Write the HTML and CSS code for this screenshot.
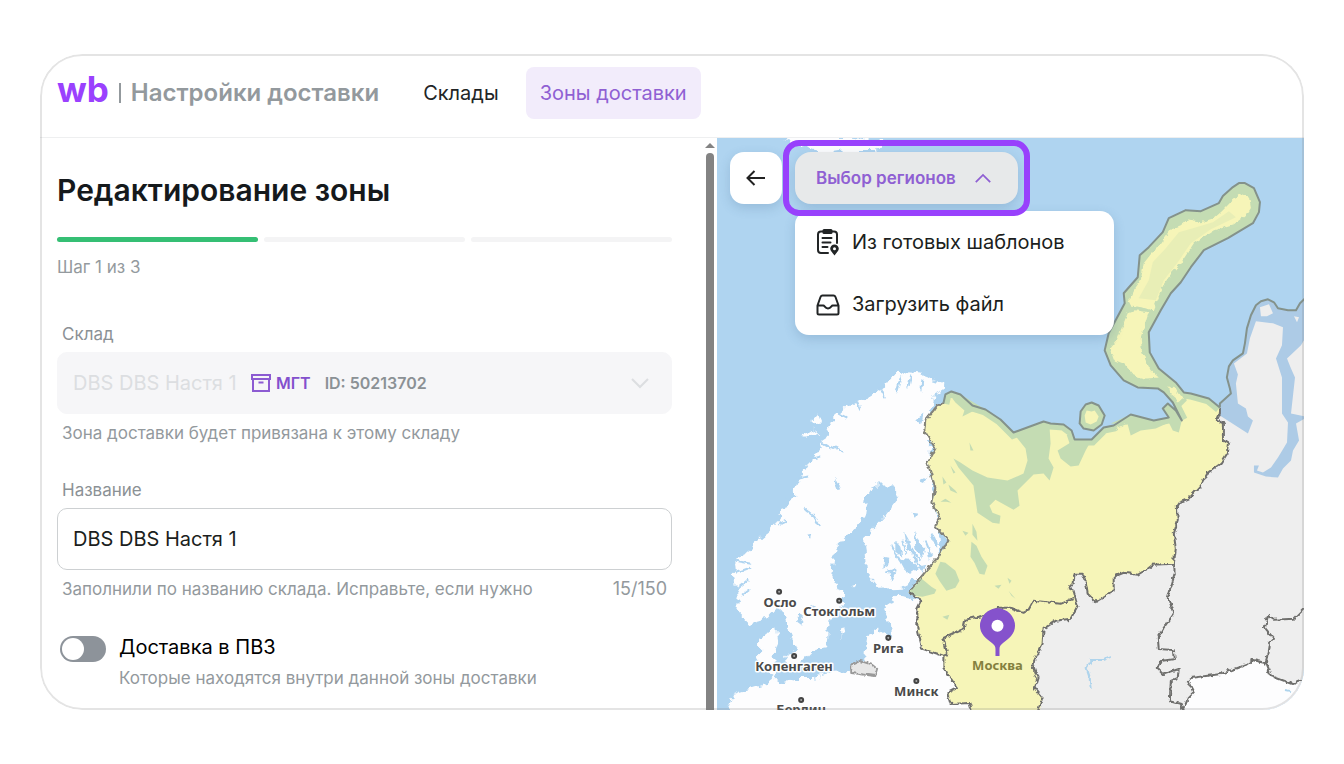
FILE: index.html
```html
<!DOCTYPE html>
<html lang="ru">
<head>
<meta charset="utf-8">
<meta name="viewport" content="width=device-width, initial-scale=1">
<title>Настройки доставки</title>
<link rel="stylesheet" href="styles.css">
</head>
<body>
<div class="window">
  <header class="header">
    <div class="brand">
      <span class="brand-logo">wb</span>
      <span class="brand-divider"></span>
      <span class="brand-name">Настройки доставки</span>
    </div>
    <nav class="nav">
      <a class="nav-link" href="#warehouses">Склады</a>
      <a class="nav-link nav-link-active" href="#zones">Зоны доставки</a>
    </nav>
  </header>

  <main class="main">
    <section class="panel">
      <form class="form">
        <h1 class="title">Редактирование зоны</h1>
        <div class="steps">
          <span class="step step-done"></span>
          <span class="step"></span>
          <span class="step"></span>
        </div>
        <p class="steps-text">Шаг 1 из 3</p>

        <div class="field">
          <label class="label" for="warehouse">Склад</label>
          <div class="select-box">
            <select class="control select" id="warehouse" disabled>
              <option>DBS DBS Настя 1</option>
            </select>
            <div class="select-meta">
              <svg class="box-icon" viewBox="0 0 20 20"><path d="M1 2h18v4H1zM2 6v12h16V6M7.500 9.500h5"/></svg>
              <span class="tag">МГТ</span>
              <span class="id">ID: 50213702</span>
              <svg class="chevron chevron-muted" viewBox="0 0 20 12"><path d="M2 2l8 8 8-8"/></svg>
            </div>
          </div>
          <div class="hint"><span>Зона доставки будет привязана к этому складу</span></div>
        </div>

        <div class="field">
          <label class="label" for="name">Название</label>
          <input class="control input" id="name" type="text" value="DBS DBS Настя 1">
          <div class="hint"><span>Заполнили по названию склада. Исправьте, если нужно</span><span class="counter">15/150</span></div>
        </div>

        <div class="toggle-row">
          <input class="toggle" id="pickup" type="checkbox" role="switch">
          <div class="toggle-text">
            <label class="toggle-label" for="pickup">Доставка в ПВЗ</label>
            <p class="toggle-hint">Которые находятся внутри данной зоны доставки</p>
          </div>
        </div>
      </form>
      <div class="scrollbar">
        <span class="scroll-arrow"></span>
        <span class="scroll-thumb"></span>
      </div>
    </section>

    <section class="map">
      <svg class="map-canvas" viewBox="717 138 586 571" preserveAspectRatio="xMinYMin slice">
        <defs>
          <filter id="coast" x="-5%" y="-5%" width="110%" height="110%" color-interpolation-filters="sRGB">
            <feTurbulence type="fractalNoise" baseFrequency="0.13" numOctaves="2" seed="4"/>
            <feDisplacementMap in="SourceGraphic" scale="11" xChannelSelector="R" yChannelSelector="G"/>
          </filter>
          <filter id="rough" x="-5%" y="-5%" width="110%" height="110%" color-interpolation-filters="sRGB">
            <feTurbulence type="fractalNoise" baseFrequency="0.2" numOctaves="2" seed="8"/>
            <feDisplacementMap in="SourceGraphic" scale="5" xChannelSelector="R" yChannelSelector="G"/>
          </filter>
          <path id="northwest" d="M943 403L945 394 951 391 960 394 972 405 985 409 1000 419 1013 432 1043 421 1050 423 1063 424 1071 430 1074 439 1091 439 1103 427 1113 425 1130 414 1153 420 1168 417 1162 408 1167 403 1175 410 1181 420 1172 402 1183 392 1190 393 1208 398 1219 407 1219 413 1216 420 1223 423 1223 440 1228 443 1227 452 1220 463 1207 472 1200 485 1188 498 1178 502 1176 505 1177 520 1173 533 1175 548 1173 563 1152 564 1147 568 1137 574 1123 572 1113 576 1113 590 1095 601 1087 593 1085 580 1082 573 1074 573 1073 582 1068 587 1073 590 1077 605 1070 618 1055 620 1043 628 1042 643 1032 663 1037 677 1034 687 1042 697 1037 720 972 720 969 702 950 703 947 692 957 687 943 667 943 655 922 648 917 628 917 607 921 599 908 592 920 577 937 557 948 540 935 525 939 517 932 502 935 487 927 462 935 448 924 430 925 420 937 405Z"/>
          <path id="north-coast" d="M943 403L945 394 951 391 960 394 972 405 985 409 1000 419 1013 432 1043 421 1050 423 1063 424 1071 430 1074 439 1091 439 1103 427 1113 425 1130 414 1153 420 1168 417 1162 408 1167 403 1175 410 1181 420 1172 402 1163 392 1157 388 1137 387 1123 380 1110 365 1104 350 1108 333 1124 303 1123 293 1137 277 1139 255 1148 247 1162 232 1168 218 1185 210 1200 211 1218 203 1222 196 1232 187 1238 183 1244 183 1253 188 1259 202 1258 212 1252 223 1227 238 1203 250 1190 267 1180 282 1170 293 1160 310 1148 332 1149 352 1158 368 1175 382 1183 392 1190 393 1208 398 1219 407"/>
          <clipPath id="northwest-clip"><use href="#northwest"/></clipPath>
        </defs>
        <rect class="sea" x="700" y="120" width="1600" height="1200"/>

        <g class="land" filter="url(#coast)">
          <path d="M896 371l10 3 6-3 9 1 12 8 10 3-1 7-8 4-2 10-2 60 10 80-3 16-18 18-16 9-24 1-13-15-2-26 2-12 17-18 15-20-5-12-20 0-7 12-3 20-29 33-3 26 13 20-8 17-8 10-2 25-15 3-8 9-5-7-9-23-5-20-6-5-12 13-17 5-13-13 3-14-3-13-2-23 10-7 27-23 17-27 11-23 14-24 13-20 5-16 15-14 23-10 14-9z"/>
          <path d="M918 598l-19-3-15 10 5 12 2 20-13-9-12 5-2 24-13 13-18 2-20 5-17 0-13 5-14-9-10-16 0-17 17-13 2 13-4 17 2 18-10 8-33 10-10 30h260l-30-100z"/>
          <path d="M784 655l14-5 5 9-8 8-9-3zM841 628l3-4 1 8-4 4zM800 437l12-8 6 4-11 4zM810 423l8-9 3 8zM852 585l4-1-1 4z"/>
          <path d="M783 141l12-4 50 0 18 2 20 2-8 10-30 0-18 3-14-5z"/>
        </g>
        <g class="fjords" filter="url(#rough)">
          <path d="M901 375l-5 17M911 374l-3 13M922 378l-1 14M880 388l4 10M856 400l4 10M838 413l8 4M821 442l10 6M812 458l8-2M799 478l9-2M787 498l9-3M778 524l8-4M735 560l16 3M736 572l14-5M738 587l10-8M742 594l8-6M831 445l12 6M804 508l10 8 6 10M835 480l4 9"/>
          <path class="lake" d="M915 420l8-7-2 11zM835 478l5 8-3 1zM807 534l4-1-1 4zM919 480l8-4-3 6zM911 512l7 1-3 5zM798 612l6 3-3 9-4-3zM811 604l5 2-3 3z"/>
          <path class="lake" d="M904 531l5 9 3 12-5-3zM914 530l4 10 7 7-3 10-7-8zM895 540l5 6 2 10-7-6zM930 533l6 4 2 10-5-4zM898 558l12 1 8 8-9 6-5-4zM884 556l5 1-1 7-5 3zM926 551l7 3-5 6zM888 568l7 4-4 8zM918 566l8-2-4 8z"/>
          <path d="M891 545l6 12 8 8M902 540l4 14M912 548l4 14 8 6M886 572l10-4M925 540l5 12M906 566l10 2M920 560l-8-10"/>
        </g>

        <g class="inactive">
          <path class="inner-water" d="M1219 407L1219 403 1230 393 1229 388 1226 377 1228 366 1232 360 1242 353 1244 343 1246 328 1250 315 1255 305 1260 301 1267 299 1273 302 1277 308 1287 310 1295 310 1299 303 1304 298 1900 298 1900 500 1219 500Z"/>
          <path d="M1219 415L1247 433 1252 420 1247 416 1245 408 1237 403 1235 383 1237 374 1233 363 1246 353 1249 338 1255 321 1272 323 1282 327 1281 345 1275 358 1281 377 1281 413 1287 422 1286 442 1277 457 1270 467 1262 472 1256 470 1258 465 1253 465 1253 472 1265 476 1277 477 1282 468 1290 460 1292 450 1298 440 1295 423 1304 418 1900 418 1900 1300 1020 1300 1020 570 1160 540 1190 440Z"/>
          <path d="M1259 307L1268 304 1272 313 1266 316 1260 316ZM1293 316L1298 317 1296 322ZM1304 338L1300 345 1286 358 1290 368 1294 377 1290 413 1304 416 1900 416 1900 320Z"/>
        </g>
        <path class="land" d="M1182 712L1187 698 1193 692 1187 680 1190 677 1220 673 1245 664 1252 659 1265 662 1270 675 1292 683 1304 678 1304 712Z"/>

        <use class="region" href="#northwest"/>
        <g clip-path="url(#northwest-clip)"><use class="coast-band" href="#north-coast"/></g>
        <g class="moss">
          <path d="M1172 402L1163 392 1157 388 1137 387 1123 380 1110 365 1104 350 1108 333 1124 303 1123 293 1137 277 1139 255 1148 247 1162 232 1168 218 1185 210 1200 211 1218 203 1222 196 1232 187 1238 183 1244 183 1253 188 1259 202 1258 212 1252 223 1227 238 1203 250 1190 267 1180 282 1170 293 1160 310 1148 332 1149 352 1158 368 1175 382 1183 392 1186 400 1178 408Z"/>
          <path d="M1013 432L1043 421 1049 427 1050 443 1048 458 1053 467 1049 480 1043 473 1033 474 1017 490 1019 505 1013 509 995 499 989 505 992 512 1000 515 999 523 992 522 977 512 973 485 958 467 953 458 960 462 972 470 987 477 1007 480 1023 473 1027 460 1025 448 1017 438Z"/>
          <path d="M1057 450L1070 442 1074 438 1091 439 1085 450 1078 465 1070 466 1060 458Z"/>
          <path d="M1110 423L1130 414 1153 420 1168 417 1162 408 1167 403 1175 410 1181 420 1178 432 1172 430 1168 422 1155 428 1140 430 1130 435 1127 424Z"/>
          <path d="M952 398L960 394 985 409 990 414 972 411 962 416 964 410 955 402Z"/>
          <path d="M940 561L945 562 955 570 959 580 955 587 946 590 939 580 935 573ZM908 592L920 577 925 581 931 586 936 589 934 593 922 596 915 595ZM971 541L976 545 981 556 987 565 984 574 979 573 974 562 970 556ZM972 523L976 531 977 540 972 534ZM950 465L955 472 953 473ZM942 476L946 482 943 484ZM948 484L955 490 957 493 950 490ZM962 530L968 532 965 535ZM940 501L945 498 951 502 946 501ZM994 585L1001 584 998 588ZM1007 577L1011 580 1009 583ZM1008 590L1015 598 1011 595ZM942 616L949 614 947 619ZM969 442L973 450 970 450Z"/>
        </g>
        <g class="plain" filter="url(#rough)">
          <path d="M1240 194L1248 197 1250 208 1246 214 1233 224 1213 230 1193 243 1180 263 1170 274 1163 284 1157 297 1152 310 1130 305 1128 301 1133 290 1140 280 1143 263 1150 254 1157 247 1164 237 1170 229 1180 225 1187 219 1200 222 1213 218 1221 211 1229 203Z"/>
          <path d="M1127 313L1135 310 1148 312 1144 325 1140 337 1141 350 1145 360 1150 370 1158 377 1145 378 1133 375 1124 364 1114 360 1110 348 1116 340 1120 330Z"/>
          <path d="M1168 386L1175 388 1182 398 1178 401 1170 394Z"/>
          <path d="M1115 428L1125 424 1127 431 1119 429Z"/>
        </g>
        <path class="stripe" d="M1155 300L1163 280 1177 262 1190 243 1210 229 1235 217 1228 211 1212 222 1192 228 1178 232 1165 248 1152 262 1148 280 1138 298Z"/>

        <use class="shoreline" href="#north-coast"/>
        <path class="shoreline" d="M1219 407L1219 403 1230 393 1229 388 1226 377 1228 366 1232 360 1242 353 1244 343 1246 328 1250 315 1255 305 1260 301 1267 299 1273 302 1277 308 1287 310 1295 310 1299 303 1304 298"/>
        <path class="shoreline island" d="M1091 402L1098 405 1104 415 1101 424 1093 430 1083 428 1079 423 1080 411 1085 404Z"/>
        <path class="plain" d="M1086 410L1091 411 1094 410 1098 416 1096 421 1090 424 1085 422 1084 415Z"/>
        <path class="moss-line" d="M1129 308L1140 308 1151 311"/>

        <g class="borders" filter="url(#rough)">
          <path d="M1219 407L1219 413 1216 420 1223 423 1223 440 1228 443 1227 452 1220 463 1207 472 1200 485 1188 498 1178 502 1176 505 1177 520 1173 533 1175 548 1173 563 1152 564 1147 568 1137 574 1123 572 1113 576 1113 590 1095 601 1087 593 1085 580 1082 573 1074 573 1073 582 1068 587 1073 590 1077 605 1070 618 1055 620 1043 628 1042 643 1032 663 1037 677 1034 687 1042 697 1037 712"/>
          <path d="M972 712L969 702 950 703 947 692 957 687 943 667 943 655 922 648 917 628 917 607 921 599 908 592"/>
          <path class="thin" d="M908 592L920 577 937 557 948 540 935 525 939 517 932 502 935 487 927 462 935 448 924 430 925 420 937 405 943 403"/>
          <path d="M943 655L947 653 943 637 963 628 965 619 982 615 997 607 1010 607 1023 612 1028 609 1033 600 1060 603 1073 598"/>
          <path d="M1173 563L1174 573 1167 597 1173 613 1163 627 1157 637 1158 648 1173 649 1174 658 1160 660 1157 667 1163 673 1178 668 1177 677 1170 680 1169 700 1180 703 1182 710 1187 698 1193 692 1187 680 1190 677 1220 673 1245 664 1252 659 1265 662 1268 643 1273 638 1264 627 1267 615 1273 619 1293 618 1306 605"/>
          <path d="M1265 662L1270 675 1292 683 1304 678"/>
          <path class="enclave" d="M851 664L860 660 872 664 877 668 875 675 851 672Z"/>
        </g>
        <path class="river" filter="url(#rough)" d="M1111 656L1103 659 1091 659 1086 667 1089 676 1090 688M1284 689L1289 690"/>

        <g class="cities">
          <circle cx="779" cy="591" r="2"/><circle cx="839" cy="600" r="2"/><circle cx="888" cy="637" r="2"/>
          <circle cx="794" cy="655" r="2"/><circle cx="916" cy="680" r="2"/><circle cx="801" cy="699" r="2"/>
        </g>
        <g class="city-names">
          <text x="780" y="606">Осло</text>
          <text x="839" y="615">Стокгольм</text>
          <text x="888" y="652">Рига</text>
          <text x="794" y="670">Копенгаген</text>
          <text x="916" y="695">Минск</text>
          <text x="801" y="713">Берлин</text>
          <text class="capital" x="997" y="669">Москва</text>
        </g>
        <path class="pin" d="M997 607.500a17.500 17.500 0 0 0-17.500 17.500c0 8 6 13 12 17 2.500 2 3.500 3.500 3.500 6v7h4v-7c0-2.500 1-4 3.500-6 6-4 12-9 12-17a17.500 17.500 0 0 0-17.500-17.500z"/>
        <circle class="pin-hole" cx="997" cy="625" r="6"/>
      </svg>

      <div class="map-toolbar">
        <button class="back" type="button" aria-label="Назад">
          <svg class="back-icon" viewBox="0 0 24 24"><path d="M21 12H3.500M10.500 5l-7 7 7 7"/></svg>
        </button>
        <div class="regions">
          <button class="regions-button" type="button" aria-expanded="true">
            <span>Выбор регионов</span>
            <svg class="chevron chevron-accent" viewBox="0 0 20 12"><path d="M2 10l8-8 8 8"/></svg>
          </button>
          <div class="menu">
            <button class="menu-item" type="button">
              <svg class="menu-icon" viewBox="0 0 24 28"><path class="line" d="M7 3.500H5a3 3 0 0 0-3 3V22a3 3 0 0 0 3 3h7M16 3.500h2a3 3 0 0 1 3 3V15M6.500 10h9M6.500 14.500h8M6.500 19h5"/><rect x="6.500" y="1" width="10" height="5" rx="1.500"/><path fill-rule="evenodd" d="M18.500 16.500a4.300 4.300 0 0 0-4.300 4.300c0 2.200 2.200 3.800 4.300 6.700 2.100-2.900 4.300-4.500 4.300-6.700a4.300 4.300 0 0 0-4.300-4.300zm0 2.800a1.500 1.500 0 1 1 0 3 1.500 1.500 0 0 1 0-3z"/></svg>
              <span>Из готовых шаблонов</span>
            </button>
            <button class="menu-item" type="button">
              <svg class="menu-icon" viewBox="0 0 24 28"><path class="line" d="M1.500 15.500l3-8.500q.6-1.500 2-1.500h11q1.400 0 2 1.500l3 8.500V23a1.500 1.500 0 0 1-1.500 1.500H3A1.500 1.500 0 0 1 1.500 23zh6c1 0 1.500 3 4.500 3s3.500-3 4.500-3h6"/></svg>
              <span>Загрузить файл</span>
            </button>
          </div>
        </div>
      </div>
    </section>
  </main>
</div>
</body>
</html>
```

FILE: styles.css
```css
* { box-sizing: border-box; }

body {
  margin: 0;
  padding: 54px 40px;
  background: #fff;
  color: #1b1e20;
  font-family: Inter, "Noto Sans", sans-serif;
  font-size: 17px;
  line-height: 24px;
}

h1, p { margin: 0; }
button, input, select { font: inherit; color: inherit; }
svg { display: block; flex: none; }

.window {
  position: relative;
  overflow: hidden;
  border-radius: 42px;
  background: #fff;
}
.window::after {
  content: "";
  position: absolute;
  inset: 0;
  border: 2px solid rgba(120, 120, 120, .2);
  border-radius: 42px;
  pointer-events: none;
}

/* Header */
.header {
  display: flex;
  align-items: center;
  gap: 30px;
  height: 84px;
  padding: 0 17px 6px;
  border-bottom: 1px solid #eeeff0;
}
.brand { display: flex; align-items: center; }
.brand-logo {
  padding-bottom: 8px;
  color: #9a41fe;
  font-size: 35px;
  font-weight: 700;
  line-height: 40px;
}
.brand-divider { width: 2px; height: 20px; margin: 0 10px; background: #93999d; }
.brand-name { color: #93999d; font-size: 24px; font-weight: 600; line-height: 32px; }
.nav { display: flex; gap: 13px; }
.nav-link {
  padding: 12px 14px;
  border-radius: 8px;
  color: #222526;
  font-size: 20px;
  line-height: 28px;
  text-decoration: none;
}
.nav-link-active { background: #f2ecfb; color: #8f60d3; }

/* Body */
.main { display: grid; grid-template-columns: 677fr 587fr; }
.panel { display: flex; min-width: 0; }
.form { flex: 1; min-width: 0; padding: 32px 31px 20px 17px; }
.title { color: #15191c; font-size: 30px; font-weight: 600; line-height: 40px; }
.steps { display: grid; grid-template-columns: repeat(3, 1fr); gap: 6px; margin-top: 27px; }
.step { height: 5px; border-radius: 3px; background: #f4f4f5; }
.step-done { background: #35bf74; }
.steps-text { margin-top: 13px; color: #949a9e; }

.field { display: flex; flex-direction: column; margin-top: 33px; }
.steps-text + .field { margin-top: 43px; }
.label { padding-left: 5px; color: #8b9195; }
.control {
  width: 100%;
  height: 62px;
  margin: 0;
  padding: 0 15px;
  border: 1px solid #cdd0d2;
  border-radius: 10px;
  background: #fff;
  font-size: 20px;
}
.label + * { margin-top: 6px; }
.select-box { display: grid; }
.select-box > * { grid-area: 1 / 1; }
.select {
  appearance: none;
  border-color: #f6f6f8;
  background: #f6f6f8;
  color: #dcdee1;
  opacity: 1;
}
.select-meta { display: flex; align-items: center; padding: 0 22px 0 194px; pointer-events: none; }
.box-icon { width: 20px; height: 20px; fill: none; stroke: #8c5bd2; stroke-width: 2; }
.tag { margin-left: 5px; color: #8350cd; font-size: 16px; font-weight: 600; }
.id { margin-left: 14px; color: #8b9195; font-size: 16px; font-weight: 600; }
.chevron { fill: none; stroke-width: 2; }
.chevron-muted { width: 20px; height: 12px; margin-left: auto; stroke: #dcdee1; }
.hint {
  display: flex;
  justify-content: space-between;
  margin-top: 7px;
  padding: 0 5px;
  color: #93999d;
}
.counter { font-size: 18px; }

.toggle-row { display: flex; gap: 13px; margin-top: 34px; padding-left: 3px; }
.toggle {
  appearance: none;
  display: flex;
  flex: none;
  width: 46px;
  height: 26px;
  margin: 1px 0 0;
  padding: 2px;
  border-radius: 13px;
  background: #8d939a;
}
.toggle::before { content: ""; width: 22px; height: 22px; border-radius: 50%; background: #fff; }
.toggle:checked { justify-content: flex-end; background: #35bf74; }
.toggle-text { display: flex; flex-direction: column; gap: 7px; }
.toggle-label { color: #000; font-size: 20px; }
.toggle-hint { color: #93999d; }

.scrollbar {
  display: flex;
  flex-direction: column;
  align-items: center;
  gap: 5px;
  width: 14px;
  padding-top: 5px;
}
.scroll-arrow { border: 5px solid transparent; border-top: 0; border-bottom: 5px solid #838383; }
.scroll-thumb { flex: 1; width: 8px; border-radius: 4px 4px 0 0; background: #838383; }

/* Map */
.map { position: relative; min-width: 0; overflow: hidden; background: #afd4f0; }
.map-canvas { position: absolute; inset: 0; width: 100%; height: 100%; }
.sea { fill: #afd4f0; }
.land { fill: #fdfdfe; }
.fjords { fill: none; stroke: #afd4f0; stroke-width: 2; }
.lake { fill: #afd4f0; stroke: none; }
.inactive { fill: #eee; }
.inner-water { fill: #adcbe6; }
.region, .plain { fill: #f6f5b8; }
.moss { fill: #c4dcb3; }
.coast-band { fill: none; stroke: #c4dcb3; stroke-width: 12; }
.stripe { fill: #e8eeb6; }
.moss-line { fill: none; stroke: #c4dcb3; stroke-width: 2; }
.shoreline { fill: none; stroke: #84928b; stroke-width: 2; stroke-linejoin: round; }
.island { fill: #c4dcb3; }
.borders { fill: none; stroke: #6f6f6d; stroke-width: 2; stroke-linejoin: round; }
.thin { stroke: #83837a; }
.enclave { fill: #e7e7e7; stroke: #999; }
.river { fill: none; stroke: #afd4ec; stroke-width: 2; }
.cities { fill: #aaa; stroke: #444; stroke-width: 2; }
.city-names {
  fill: #4a4a4a;
  stroke: #fff;
  stroke-width: 3px;
  stroke-linejoin: round;
  paint-order: stroke;
  font-family: "Noto Sans", sans-serif;
  font-size: 13px;
  font-weight: 700;
  text-anchor: middle;
}
.capital { fill: #84803f; stroke: #f6f5b8; }
.pin { fill: #8552cc; }
.pin-hole { fill: #fff; }

.map-toolbar { position: absolute; top: 14px; left: 13px; display: flex; align-items: flex-start; gap: 13px; }
.back {
  display: grid;
  place-items: center;
  width: 52px;
  height: 52px;
  padding: 0;
  border: 0;
  border-radius: 14px;
  background: #fff;
  box-shadow: 0 4px 12px rgba(50, 90, 130, .2);
}
.back-icon { width: 24px; height: 24px; fill: none; stroke: #222; stroke-width: 2; }
.regions { position: relative; }
.regions-button {
  position: relative;
  z-index: 1;
  display: flex;
  align-items: center;
  gap: 18px;
  height: 52px;
  padding: 0 26px 0 21px;
  border: 0;
  border-radius: 16px;
  background: #e7e9ea;
  box-shadow: 0 4px 12px rgba(50, 90, 130, .2);
  color: #8f60d3;
  font-size: 17px;
  font-weight: 600;
  white-space: nowrap;
}
.regions-button::after {
  content: "";
  position: absolute;
  inset: -12px;
  border: 6px solid #9841fc;
  border-radius: 16px;
}
.chevron-accent { width: 18px; height: 11px; stroke: #8f60d3; }
.menu {
  position: absolute;
  top: 59px;
  left: 0;
  width: 319px;
  border-radius: 14px;
  background: #fff;
  box-shadow: 0 4px 12px rgba(50, 90, 130, .2);
}
.menu-item {
  display: flex;
  align-items: center;
  gap: 12px;
  width: 100%;
  height: 62px;
  padding: 0 21px;
  border: 0;
  background: none;
  font-size: 20px;
  text-align: left;
  white-space: nowrap;
}
.menu-icon { width: 24px; height: 28px; fill: #222526; }
.line { fill: none; stroke: #222526; stroke-width: 2; stroke-linecap: round; stroke-linejoin: round; }
```
